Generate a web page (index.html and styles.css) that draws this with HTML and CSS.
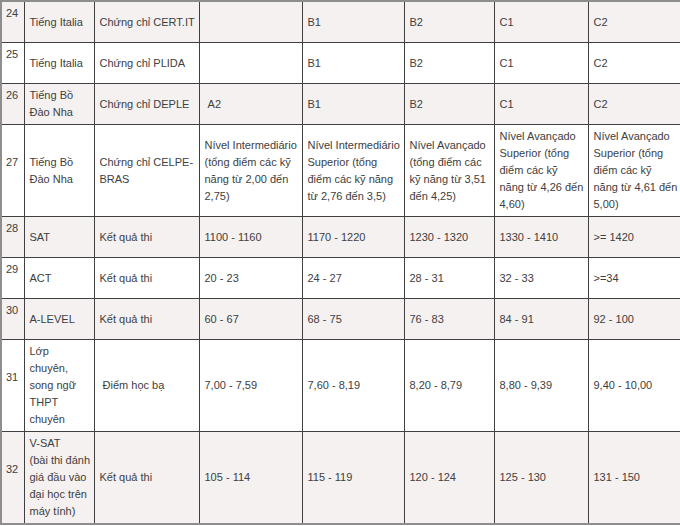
FILE: index.html
```html
<!DOCTYPE html>
<html lang="vi">
<head>
<meta charset="utf-8">
<title>Bảng quy đổi chứng chỉ</title>
<link rel="stylesheet" href="styles.css">
</head>
<body>
<div class="wrap">
<table class="grid">
  <colgroup>
    <col class="c0"><col class="c1"><col class="c2"><col class="c3"><col class="c4"><col class="c5"><col class="c6"><col class="c7">
  </colgroup>
  <tbody>
    <tr class="alt">
      <td class="num">24</td><td>Tiếng Italia</td><td>Chứng chỉ CERT.IT</td><td></td><td>B1</td><td>B2</td><td>C1</td><td>C2</td>
    </tr>
    <tr>
      <td class="num">25</td><td>Tiếng Italia</td><td>Chứng chỉ PLIDA</td><td></td><td>B1</td><td>B2</td><td>C1</td><td>C2</td>
    </tr>
    <tr class="alt">
      <td class="num">26</td><td>Tiếng Bồ Đào Nha</td><td>Chứng chỉ DEPLE</td><td>&nbsp;A2</td><td>B1</td><td>B2</td><td>C1</td><td>C2</td>
    </tr>
    <tr>
      <td class="num">27</td><td>Tiếng Bồ Đào Nha</td><td>Chứng chỉ CELPE-BRAS</td>
      <td>Nível Intermediário (tổng điểm các kỹ năng từ 2,00 đến 2,75)</td>
      <td>Nível Intermediário Superior (tổng điểm các kỹ năng từ 2,76 đến 3,5)</td>
      <td>Nível Avançado (tổng điểm các kỹ năng từ 3,51 đến 4,25)</td>
      <td>Nível Avançado Superior (tổng điểm các kỹ năng từ 4,26 đến 4,60)</td>
      <td>Nível Avançado Superior (tổng điểm các kỹ năng từ 4,61 đến 5,00)</td>
    </tr>
    <tr class="alt">
      <td class="num">28</td><td>SAT</td><td>Kết quả thi</td><td>1100 - 1160</td><td>1170 - 1220</td><td>1230 - 1320</td><td>1330 - 1410</td><td>&gt;= 1420</td>
    </tr>
    <tr>
      <td class="num">29</td><td>ACT</td><td>Kết quả thi</td><td>20 - 23</td><td>24 - 27</td><td>28 - 31</td><td>32 - 33</td><td>&gt;=34</td>
    </tr>
    <tr class="alt">
      <td class="num">30</td><td>A-LEVEL</td><td>Kết quả thi</td><td>60 - 67</td><td>68 - 75</td><td>76 - 83</td><td>84 - 91</td><td>92 - 100</td>
    </tr>
    <tr>
      <td class="num">31</td><td>Lớp chuyên, song ngữ THPT chuyên</td><td>&nbsp;Điểm học bạ</td><td>7,00 - 7,59</td><td>7,60 - 8,19</td><td>8,20 - 8,79</td><td>8,80 - 9,39</td><td>9,40 - 10,00</td>
    </tr>
    <tr class="alt">
      <td class="num">32</td><td>V-SAT<br>(bài thi đánh giá đầu vào đại học trên máy tính)</td><td>Kết quả thi</td><td>105 - 114</td><td>115 - 119</td><td>120 - 124</td><td>125 - 130</td><td>131 - 150</td>
    </tr>
  </tbody>
</table>
</div>
</body>
</html>
```

FILE: styles.css
```css
html, body {
  margin: 0;
  padding: 0;
  background: #ffffff;
  overflow: hidden;
}

.wrap {
  width: 680px;
  height: 526px;
  overflow: hidden;
}

.grid {
  border-collapse: collapse;
  table-layout: fixed;
  width: 681px;
  border: 2px solid #8e8e8e;
  font-family: "Liberation Sans", Arial, sans-serif;
  font-size: 11px;
  line-height: 17px;
  color: #404040;
}

.c0 { width: 23px; }
.c1 { width: 70px; }
.c2 { width: 105px; }
.c3 { width: 103px; }
.c4 { width: 102px; }
.c5 { width: 90px; }
.c6 { width: 94px; }
.c7 { width: 94px; }

.grid td {
  border: 1px solid #404040;
  padding: 3px 3px 3px 5px;
  vertical-align: middle;
  text-align: left;
  word-wrap: break-word;
}

.grid tr.alt td {
  background: #f4f1f0;
}

.grid td.num {
  padding-left: 4px;
  padding-right: 0;
}

.grid td.num::after {
  content: "";
  display: block;
  height: 17px;
}
```
